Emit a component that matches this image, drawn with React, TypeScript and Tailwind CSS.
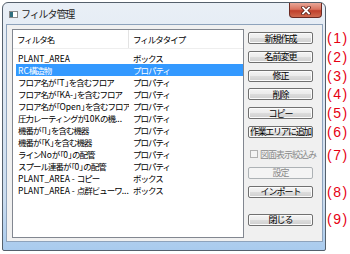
const rows = [
  { name: "PLANT_AREA", type: "ボックス" },
  { name: "RC構造物", type: "プロパティ", selected: true },
  { name: "フロア名が「T」を含むフロア", type: "プロパティ" },
  { name: "フロア名が「KA-」を含むフロア", type: "プロパティ" },
  { name: "フロア名が「Open」を含むフロア", type: "プロパティ" },
  { name: "圧力レーティングが10Kの機...", type: "プロパティ" },
  { name: "機番が「I」を含む機器", type: "プロパティ" },
  { name: "機番が「K」を含む機器", type: "プロパティ" },
  { name: "ラインNoが「0」の配管", type: "プロパティ" },
  { name: "スプール連番が「0」の配管", type: "プロパティ" },
  { name: "PLANT_AREA - コピー", type: "ボックス" },
  { name: "PLANT_AREA - 点群ビューワ...", type: "ボックス" },
];

// kana/kanji get squeezed, latin runs keep normal spacing, brackets made half width
function Txt({ s }: { s: string }) {
  const parts = s.split(/([\x20-\x7e]+|「|」)/).filter((p) => p !== "");
  return (
    <>
      {parts.map((p, i) => {
        if (p === "「") return <span key={i} className="ml-[-3.5px]">{p}</span>;
        if (p === "」") return <span key={i} className="tracking-[-4.5px]">{p}</span>;
        if (/^[\x20-\x7e]+$/.test(p)) return <span key={i} className="tracking-normal">{p}</span>;
        return <span key={i}>{p}</span>;
      })}
    </>
  );
}

function WinButton({ label, disabled = false, tight = false }: { label: string; disabled?: boolean; tight?: boolean }) {
  return (
    <div
      className={`h-[12px] w-[65px] rounded-[2px] border flex items-center justify-center whitespace-nowrap text-[9px] leading-none ${
        tight ? "tracking-[-1.4px]" : "tracking-[-1px]"
      } ${
        disabled
          ? "border-[#adb2b5] bg-[#f4f4f4] text-[#8a8a8a]"
          : "border-[#707070] bg-[linear-gradient(#f4f4f4_0%,#ebebeb_50%,#dddddd_50%,#cfcfcf_100%)] text-black shadow-[inset_0_0_0_1px_#fbfbfb]"
      }`}
    >
      {label}
    </div>
  );
}

export default function App() {
  return (
    <div className="w-[350px] h-[254px] bg-white flex pt-[2px] pl-[2px] font-['Noto_Sans_CJK_JP',sans-serif] text-black">
      {/* window */}
      <div className="w-[324px] h-[249px] rounded-t-[6px] rounded-b-[2px] border border-[#55606c] bg-[linear-gradient(#e9eff6_0%,#dfe8f3_30%,#cadcef_80%,#a9cbee_100%)] flex flex-col">
        {/* title bar */}
        <div className="h-[21px] flex items-start">
          <div className="ml-[6px] mt-[8px] w-[9px] h-[7px] border border-[#8a8a8a] bg-white flex">
            <div className="w-[3px] h-full bg-[#2f6f7f]" />
          </div>
          <span className="ml-[3px] mt-[4px] text-[10px] tracking-[-1.1px] leading-[13px] text-[#1e1e1e]">フィルタ管理</span>
          <div className="ml-auto mr-[3px] w-[33px] h-[15px] rounded-b-[4px] border border-t-0 border-[#6a2a22] bg-[linear-gradient(#e9a797_0%,#d9735f_45%,#c0402b_55%,#cf6a4f_100%)] flex items-center justify-center">
            <svg width="10" height="9" viewBox="0 0 10 9">
              <path d="M2 1.5 L8 7.5 M8 1.5 L2 7.5" stroke="#5a1d14" strokeWidth="3.4" strokeLinecap="square" />
              <path d="M2 1.5 L8 7.5 M8 1.5 L2 7.5" stroke="#ffffff" strokeWidth="1.8" strokeLinecap="square" />
            </svg>
          </div>
        </div>

        {/* client area */}
        <div className="ml-[3px] mr-[2px] mb-[8px] flex-1 border border-[#8ea3bc] bg-[#f0f0f0] flex">
          {/* list view */}
          <div className="ml-[5px] mt-[4px] w-[232px] h-[209px] border border-[#828790] bg-white flex flex-col text-[8.5px] tracking-[-1px]">
            <div className="h-[19px] flex items-center border-b border-[#eeeeee]">
              <div className="w-[116px] pl-[4px] h-full flex items-center border-r border-[#e3e3e3]">フィルタ名</div>
              <div className="pl-[4px]">フィルタタイプ</div>
            </div>
            <div className="pt-[3px] flex flex-col">
              {rows.map((r) => (
                <div
                  key={r.name}
                  className={`ml-[3px] h-[12px] flex items-center leading-[12px] whitespace-nowrap ${
                    r.selected ? "bg-[#3399ff] text-white" : ""
                  }`}
                >
                  <div className="w-[113px] pl-[2px] overflow-hidden">
                    <Txt s={r.name} />
                  </div>
                  <div className="pl-[4px]">{r.type}</div>
                </div>
              ))}
            </div>
          </div>

          {/* buttons */}
          <div className="ml-[4px] mt-[7px] flex flex-col">
            <div className="flex flex-col gap-[6.8px]">
              <WinButton label="新規作成" />
              <WinButton label="名前変更" />
              <WinButton label="修正" />
              <WinButton label="削除" />
              <WinButton label="コピー" />
              <WinButton label="作業エリアに追加" tight />
            </div>
            <div className="mt-[12px] flex items-center h-[9px] text-[9px] tracking-[-1px] text-[#8a8a8a] whitespace-nowrap">
              <div className="ml-[2px] w-[8px] h-[8px] border border-[#b1b1b1] bg-[#f4f4f4]" />
              <span className="ml-[2px] leading-none">図面表示絞込み</span>
            </div>
            <div className="mt-[8px]">
              <WinButton label="設定" disabled />
            </div>
            <div className="mt-[7px]">
              <WinButton label="インポート" />
            </div>
            <div className="mt-[16px]">
              <WinButton label="閉じる" />
            </div>
          </div>
        </div>
      </div>

      {/* annotation labels */}
      <div className="ml-[1px] flex flex-col font-['Liberation_Sans',sans-serif] text-[14px] leading-[14px] tracking-[1.5px] text-[#e60012]">
        <span className="mt-[29px] h-[14px]">(1)</span>
        <span className="mt-[5px] h-[14px]">(2)</span>
        <span className="mt-[5px] h-[14px]">(3)</span>
        <span className="mt-[4px] h-[14px]">(4)</span>
        <span className="mt-[5px] h-[14px]">(5)</span>
        <span className="mt-[5px] h-[14px]">(6)</span>
        <span className="mt-[9px] h-[14px]">(7)</span>
        <span className="mt-[23px] h-[14px]">(8)</span>
        <span className="mt-[13px] h-[14px]">(9)</span>
      </div>
    </div>
  );
}
